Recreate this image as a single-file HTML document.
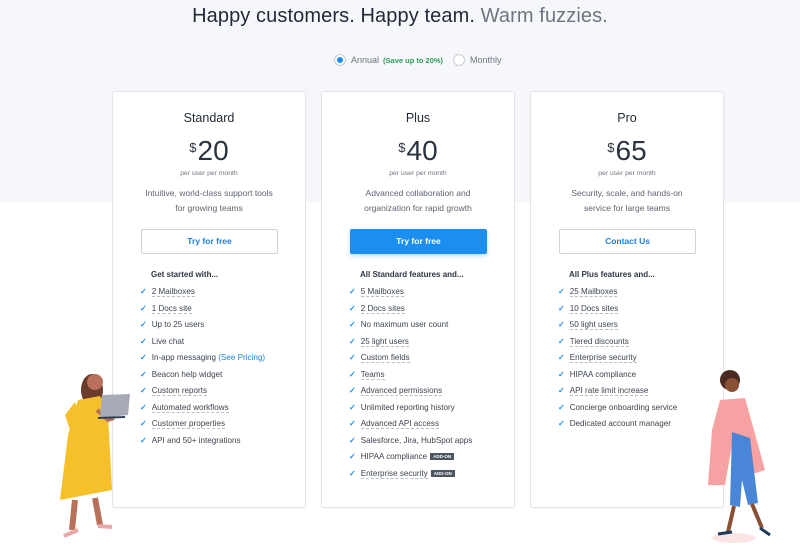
<!DOCTYPE html>
<html><head><meta charset="utf-8"><style>
*{margin:0;padding:0;box-sizing:border-box}
body{width:800px;height:544px;overflow:hidden;background:#fff;font-family:"Liberation Sans",sans-serif;color:#2d3540;position:relative}
.bg{position:absolute;left:0;top:0;width:800px;height:202px;background:#f6f7fa}
h1{position:absolute;top:5px;left:0;width:800px;text-align:center;font-size:20px;font-weight:normal;color:#1f2a36;letter-spacing:.1px}
h1 span{color:#6d7580}
.toggle{position:absolute;top:54px;left:334px;font-size:9px;color:#6d7580;display:flex;align-items:center}
.rad{width:12px;height:12px;border-radius:50%;border:1px solid #c8ccd2;background:#fff;display:inline-block;margin-right:5px;position:relative}
.rad.on::after{content:"";position:absolute;left:2px;top:2px;width:6px;height:6px;border-radius:50%;background:#1c8ef0}
.save{color:#2f9b59;font-size:7.5px;font-weight:bold;margin-left:4px;margin-right:10px}
.card{position:absolute;top:91px;width:194px;height:417px;background:#fff;border:1px solid #e1e4e8;border-radius:3px;box-shadow:0 1px 2px rgba(0,0,0,.04)}
.t{position:absolute;top:19px;width:100%;text-align:center;font-size:12.5px;color:#1f2a36}
.p{position:absolute;top:43px;width:100%;text-align:center;font-size:28px;color:#2a3440}
.p sup{font-size:13px;vertical-align:top;position:relative;top:5px;margin-right:1px}
.pu{position:absolute;top:78px;width:100%;text-align:center;font-size:6.8px;color:#6d7580}
.d{position:absolute;top:94px;width:100%;text-align:center;font-size:8.5px;line-height:15px;color:#5c6570}
.btn{position:absolute;top:137px;left:28px;width:137px;height:25px;border:1px solid #cfd4da;border-radius:2px;text-align:center;line-height:23px;font-size:8.5px;color:#1c7fe0;font-weight:bold}
.btn.b{background:#1c8ef0;color:#fff;border-color:#1c8ef0;box-shadow:0 2px 4px rgba(28,142,240,.3)}
.fh{position:absolute;top:178px;left:38px;font-size:8px;font-weight:bold;color:#2d3540}
ul{position:absolute;top:193px;left:27px;list-style:none;font-size:8.1px;color:#3c4550}
li{height:16.5px;line-height:13px;white-space:nowrap}
li::before{content:"✓";color:#1c8ef0;font-weight:bold;margin-right:5px;font-size:8px}
li u{text-decoration:none;border-bottom:1px dashed #b8bec6}
.add{background:#4d5560;color:#fff;font-size:4.5px;font-weight:bold;padding:1px 3px;margin-left:3px;vertical-align:1px}
a{color:#1c7fe0;text-decoration:none}
svg{position:absolute}
</style></head><body>
<div class="bg"></div>
<h1>Happy customers. Happy team. <span>Warm fuzzies.</span></h1>
<div class="toggle"><i class="rad on"></i>Annual<span class="save">(Save up to 20%)</span><i class="rad"></i>Monthly</div>

<div class="card" style="left:112px">
<div class="t">Standard</div><div class="p"><sup>$</sup>20</div><div class="pu">per user per month</div>
<div class="d">Intuitive, world-class support tools<br>for growing teams</div>
<div class="btn">Try for free</div>
<div class="fh">Get started with...</div>
<ul><li><u>2 Mailboxes</u></li><li><u>1 Docs site</u></li><li>Up to 25 users</li><li>Live chat</li><li>In-app messaging <a>(See Pricing)</a></li><li>Beacon help widget</li><li><u>Custom reports</u></li><li><u>Automated workflows</u></li><li><u>Customer properties</u></li><li>API and 50+ integrations</li></ul>
</div>

<div class="card" style="left:321px">
<div class="t">Plus</div><div class="p"><sup>$</sup>40</div><div class="pu">per user per month</div>
<div class="d">Advanced collaboration and<br>organization for rapid growth</div>
<div class="btn b">Try for free</div>
<div class="fh">All Standard features and...</div>
<ul><li><u>5 Mailboxes</u></li><li><u>2 Docs sites</u></li><li>No maximum user count</li><li><u>25 light users</u></li><li><u>Custom fields</u></li><li><u>Teams</u></li><li><u>Advanced permissions</u></li><li>Unlimited reporting history</li><li><u>Advanced API access</u></li><li>Salesforce, Jira, HubSpot apps</li><li>HIPAA compliance<span class="add">ADD-ON</span></li><li><u>Enterprise security</u><span class="add">ADD-ON</span></li></ul>
</div>

<div class="card" style="left:530px">
<div class="t">Pro</div><div class="p"><sup>$</sup>65</div><div class="pu">per user per month</div>
<div class="d">Security, scale, and hands-on<br>service for large teams</div>
<div class="btn">Contact Us</div>
<div class="fh">All Plus features and...</div>
<ul><li><u>25 Mailboxes</u></li><li><u>10 Docs sites</u></li><li><u>50 light users</u></li><li><u>Tiered discounts</u></li><li><u>Enterprise security</u></li><li>HIPAA compliance</li><li><u>API rate limit increase</u></li><li>Concierge onboarding service</li><li>Dedicated account manager</li></ul>
</div>

<svg style="left:50px;top:360px" width="90" height="184" viewBox="0 0 90 184">
<ellipse cx="42" cy="30" rx="11" ry="16" fill="#6b3b2e"/>
<circle cx="45" cy="22" r="8" fill="#b9705a"/>
<path d="M28 40 L50 36 L58 55 L62 130 L10 140 L18 75 Z" fill="#f5c02a"/>
<path d="M25 42 L15 55 L20 70 L30 55Z" fill="#f5c02a"/>
<path d="M47 50 L58 60 L64 58" stroke="#b9705a" stroke-width="4" fill="none"/>
<path d="M52 35 L80 34 L78 55 L50 58Z" fill="#a7abb8"/>
<path d="M48 58 L75 57" stroke="#333f55" stroke-width="2"/>
<path d="M25 140 L22 170 M45 138 L50 165" stroke="#b9705a" stroke-width="6"/>
<path d="M14 176 L28 170 M48 166 L62 167" stroke="#e8a8a8" stroke-width="4"/>
</svg>
<svg style="left:690px;top:360px" width="90" height="184" viewBox="0 0 90 184">
<ellipse cx="44" cy="178" rx="22" ry="5" fill="#fbe4e4"/>
<circle cx="40" cy="20" r="10" fill="#4a2a22"/>
<circle cx="42" cy="25" r="7" fill="#8a5036"/>
<rect x="40" y="38" width="8" height="40" fill="#fff"/>
<path d="M30 40 L55 38 L75 110 L60 115 L58 80 L42 85 L35 125 L18 125 L22 70Z" fill="#f6a2a2"/>
<path d="M42 72 L40 145 L50 147 L52 120 L58 145 L68 143 L60 78Z" fill="#4a86d8"/>
<path d="M44 146 L38 172 M62 144 L72 168" stroke="#8a5036" stroke-width="4"/>
<path d="M28 174 L42 172 M70 168 L80 175" stroke="#1f3a5a" stroke-width="3"/>
</svg>
</body></html>
